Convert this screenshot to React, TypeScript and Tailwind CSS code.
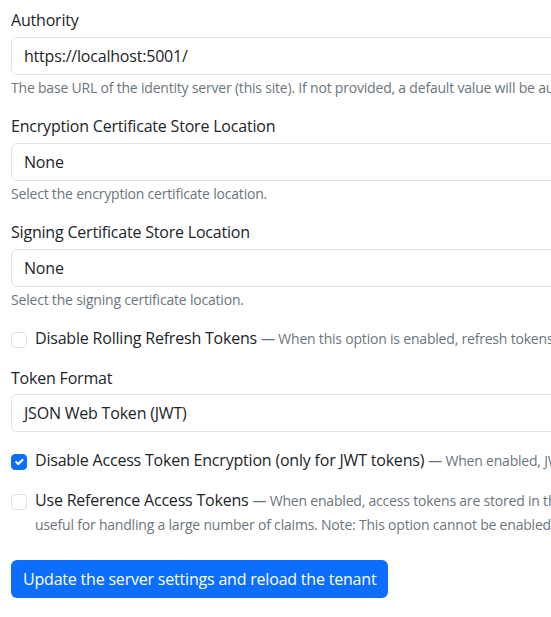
import { ReactNode } from 'react';

function Field({ label, children, help, labelGap = 'mb-[5px]' }: { label: string; children: ReactNode; help?: string; labelGap?: string }) {
  return (
    <div className="mb-4">
      <label className={`block text-base leading-6 ${labelGap} text-[#212529]`}>{label}</label>
      {children}
      {help && <div className="mt-[2px] text-sm leading-[21px] text-[#6c757d]">{help}</div>}
    </div>
  );
}

function TextBox({ value }: { value: string }) {
  return (
    <div className="h-[38px] flex items-center px-3 border border-[#dee2e6] rounded-[6px] bg-white text-base text-[#212529]">
      {value}
    </div>
  );
}

function Check({ checked, title, desc, className }: { checked?: boolean; title: string; desc: string; className?: string }) {
  return (
    <div className={`flex items-start gap-2 ${className ?? ''}`}>
      <span
        className={`mt-[6px] w-4 h-4 flex-shrink-0 rounded-[4px] border flex items-center justify-center ${
          checked ? 'bg-[#0d6efd] border-[#0d6efd]' : 'bg-white border-[#dee2e6]'
        }`}
      >
        {checked && (
          <svg viewBox="0 0 20 20" className="w-4 h-4">
            <path d="m6 10 3 3 6-6" fill="none" stroke="#fff" strokeWidth="3" strokeLinecap="round" strokeLinejoin="round" />
          </svg>
        )}
      </span>
      <label className="text-base leading-6 text-[#212529]">
        {title} <span className="text-sm text-[#6c757d]">— {desc}</span>
      </label>
    </div>
  );
}

export default function App() {
  return (
    <div
      className="w-full min-h-[617px] overflow-hidden bg-white tracking-[-0.2px]"
      style={{ fontFamily: '"Open Sans", sans-serif' }}
    >
      <div className="w-[800px] pl-[11px] pt-2 pb-4">
        <Field
          label="Authority"
          help="The base URL of the identity server (this site). If not provided, a default value will be automatically used."
        >
          <TextBox value="https://localhost:5001/" />
        </Field>
        <Field label="Encryption Certificate Store Location" help="Select the encryption certificate location.">
          <TextBox value="None" />
        </Field>
        <Field label="Signing Certificate Store Location" help="Select the signing certificate location.">
          <TextBox value="None" />
        </Field>

        <Check
          className="mt-[2px] mb-4"
          title="Disable Rolling Refresh Tokens"
          desc="When this option is enabled, refresh tokens won't be renewed."
        />

        <Field label="Token Format" labelGap="mb-1">
          <TextBox value="JSON Web Token (JWT)" />
        </Field>

        <Check
          checked
          className="mb-4"
          title="Disable Access Token Encryption (only for JWT tokens)"
          desc="When enabled, JWT access tokens are not encrypted."
        />
        <Check
          title="Use Reference Access Tokens"
          desc="When enabled, access tokens are stored in the database instead of the token. It is useful for handling a large number of claims. Note: This option cannot be enabled if encryption is on."
        />

        <button className="mt-6 h-[38px] px-3 rounded-[6px] bg-[#0d6efd] text-white text-base">
          Update the server settings and reload the tenant
        </button>
      </div>
    </div>
  );
}
